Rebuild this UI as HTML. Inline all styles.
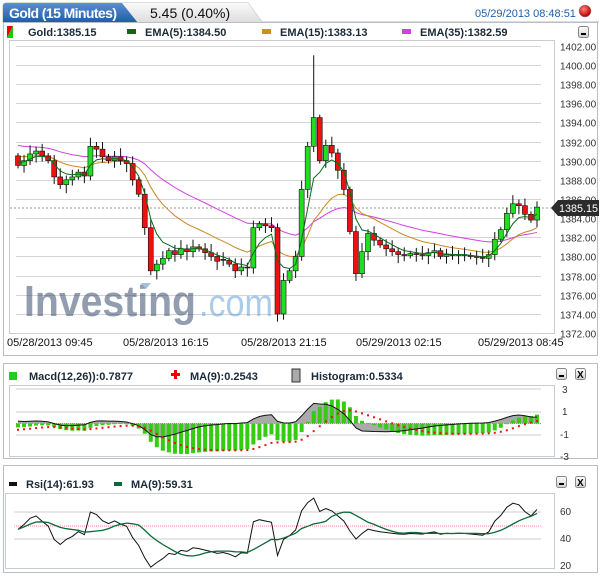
<!DOCTYPE html>
<html><head><meta charset="utf-8"><style>
body{margin:0;background:#fff;width:602px;height:575px;overflow:hidden;font-family:"Liberation Sans",Arial,sans-serif;}
svg text{font-family:"Liberation Sans",Arial,sans-serif;}
</style></head><body>
<svg id="s" width="602" height="575" xmlns="http://www.w3.org/2000/svg">
<defs>
<linearGradient id="tab" x1="0" y1="0" x2="0" y2="1"><stop offset="0" stop-color="#5b8fd0"/><stop offset="1" stop-color="#1d5ba8"/></linearGradient>
<linearGradient id="tab2" x1="0" y1="0" x2="0" y2="1"><stop offset="0" stop-color="#fafafa"/><stop offset="1" stop-color="#dcdcdc"/></linearGradient>
<radialGradient id="rb" cx="0.4" cy="0.35" r="0.6"><stop offset="0" stop-color="#ff8080"/><stop offset="1" stop-color="#c00000"/></radialGradient>
<linearGradient id="btn" x1="0" y1="0" x2="0" y2="1"><stop offset="0" stop-color="#fff"/><stop offset="1" stop-color="#d0d0d0"/></linearGradient>
</defs>
<path d="M3,23 L3,6 Q3,3 6,3 L248,3 L262,22 L599,22" fill="none" stroke="#b8bec4"/>
<path d="M3,23 L3,6 Q3,3 6,3 L248,3 L262,22 Z" fill="url(#tab2)"/>
<path d="M3,23 L3,6 Q3,3 6,3 L122,3 L138,23 Z" fill="url(#tab)"/>
<text x="9" y="18" font-size="14" font-weight="bold" fill="#fff" textLength="108">Gold (15 Minutes)</text>
<text x="150" y="18" font-size="14" fill="#111">5.45 (0.40%)</text>
<text x="475" y="17" font-size="11" fill="#1f5fa8">05/29/2013 08:48:51</text>
<circle cx="585" cy="11" r="6" fill="url(#rb)" stroke="#888" stroke-width="0.5"/>
<rect x="3.5" y="22.5" width="594" height="333" fill="#fff" stroke="#b8bec4"/>
<path d="M7,26 L13,26 L7,38 Z" fill="#e00"/><path d="M13,26 L13,38 L7,38 Z" fill="#1c1"/>
<g font-size="11" font-weight="bold" fill="#1a2a3a">
<text x="28" y="36">Gold:1385.15</text>
<rect x="127" y="29" width="9" height="5" fill="#0a6a1a"/><text x="145" y="36">EMA(5):1384.50</text>
<rect x="262" y="29" width="9" height="5" fill="#d09018"/><text x="280" y="36">EMA(15):1383.13</text>
<rect x="402" y="29" width="9" height="5" fill="#d040e0"/><text x="420" y="36">EMA(35):1382.59</text>
</g>
<rect x="578.5" y="26.5" width="10" height="11" rx="2" fill="url(#btn)" stroke="#888"/><rect x="581" y="33" width="5" height="2" fill="#000"/>
<rect x="9.5" y="40.5" width="545" height="293" fill="#fff" stroke="#c8ccd0"/>
<g id="grid" stroke="#d4d4d4" stroke-width="1"></g>
<g id="ylab" font-size="10" fill="#333"></g>
<g font-size="11" fill="#111">
<text x="7" y="346">05/28/2013 09:45</text><text x="123" y="346">05/28/2013 16:15</text>
<text x="241" y="346">05/28/2013 21:15</text><text x="356" y="346">05/29/2013 02:15</text>
<text x="478" y="346">05/29/2013 08:45</text>
</g>
<g opacity="0.55"><text x="24" y="316" font-size="44" font-weight="bold" fill="#3a4f6e" textLength="172" lengthAdjust="spacingAndGlyphs">Investing</text>
<text x="199" y="316" font-size="38" fill="#6aa0d8" textLength="74" lengthAdjust="spacingAndGlyphs">.com</text>
<path d="M141,283 L151,283 L146,289 Z" fill="#5a8ac0"/></g>
<line x1="10" y1="208" x2="553" y2="208" stroke="#999" stroke-dasharray="2,2"/>
<g id="main"></g>
<path d="M551,208 L558,200 L599,200 L599,216 L558,216 Z" fill="#2b2b2b"/>
<text x="559" y="212" font-size="11" fill="#fff" textLength="39" lengthAdjust="spacingAndGlyphs">1385.15</text>
<rect x="3.5" y="363.5" width="594" height="95" fill="#fff" stroke="#b8bec4"/>
<rect x="9" y="372" width="8" height="8" fill="#2c2"/>
<path d="M171,373 h3 v-3 h3 v3 h3 v3 h-3 v3 h-3 v-3 h-3 Z" fill="#e00"/>
<rect x="292" y="369" width="8" height="13" fill="#aaa" stroke="#333"/>
<g font-size="11" font-weight="bold" fill="#1a2a3a">
<text x="29" y="380">Macd(12,26)):0.7877</text><text x="190" y="380">MA(9):0.2543</text><text x="311" y="380">Histogram:0.5334</text></g>
<rect x="556.5" y="368.5" width="10" height="11" rx="2" fill="url(#btn)" stroke="#888"/><rect x="559" y="375" width="5" height="2" fill="#000"/>
<rect x="575.5" y="368.5" width="10" height="11" rx="2" fill="url(#btn)" stroke="#888"/><text x="577" y="378" font-size="10" font-weight="bold">X</text>
<rect x="9.5" y="385.5" width="545" height="71" fill="#fff" stroke="#c8ccd0"/>
<g stroke="#ccc"><line x1="16" y1="389" x2="541" y2="389"/><line x1="16" y1="412" x2="541" y2="412"/><line x1="16" y1="435" x2="541" y2="435"/></g>
<line x1="16" y1="423.5" x2="541" y2="423.5" stroke="#f55" stroke-dasharray="1,1"/>
<g font-size="10" fill="#333"><text x="562" y="393">3</text><text x="562" y="415">1</text><text x="560" y="438">-1</text><text x="560" y="460">-3</text></g>
<g id="macd"></g>
<rect x="3.5" y="465.5" width="594" height="107" fill="#fff" stroke="#b8bec4"/>
<rect x="9" y="482" width="8" height="4" fill="#111"/><rect x="114" y="482" width="8" height="4" fill="#0a6a3a"/>
<g font-size="11" font-weight="bold" fill="#1a2a3a"><text x="26" y="488">Rsi(14):61.93</text><text x="131" y="488">MA(9):59.31</text></g>
<rect x="556.5" y="476.5" width="10" height="11" rx="2" fill="url(#btn)" stroke="#888"/><rect x="559" y="483" width="5" height="2" fill="#000"/>
<rect x="575.5" y="476.5" width="10" height="11" rx="2" fill="url(#btn)" stroke="#888"/><text x="577" y="486" font-size="10" font-weight="bold">X</text>
<rect x="5.5" y="493.5" width="549" height="75" fill="#fff" stroke="#c8ccd0"/>
<g stroke="#ccc"><line x1="14" y1="512" x2="541" y2="512"/><line x1="14" y1="539" x2="541" y2="539"/></g>
<line x1="14" y1="526" x2="541" y2="526" stroke="#f88" stroke-dasharray="1,1"/>
<g font-size="10" fill="#333"><text x="560" y="515">60</text><text x="560" y="542">40</text><text x="560" y="569">20</text></g>
<g id="rsi"></g>
</svg>
<script>
var NS="http://www.w3.org/2000/svg";
function el(p,t,a){var e=document.createElementNS(NS,t);for(var k in a)e.setAttribute(k,a[k]);document.getElementById(p).appendChild(e);return e;}
function Y(p){return 45.7+(1402-p)*9.58;}
for(var i=0;i<16;i++){var p=1402-2*i;var y=Math.round(Y(p))+0.5;el("grid","line",{x1:16,y1:y,x2:541,y2:y});var t=el("ylab","text",{x:560,y:y+4});t.textContent=p.toFixed(2);}
var C=[1389.5,1390,1390.7,1391,1390.5,1390,1388.3,1387.5,1388,1388.3,1388.8,1388.4,1391.5,1391.2,1390.4,1390,1390.4,1390,1389.7,1388,1386.5,1383,1378.5,1379.2,1379.8,1380.6,1380.2,1380.8,1380.5,1381,1380.8,1380.4,1380,1379.5,1379.6,1379.2,1378.5,1378.9,1378.8,1383,1383.4,1383.2,1383,1374,1377.5,1378.5,1380,1387,1391.5,1394.5,1390,1391.6,1390.8,1389,1387,1382.6,1378.2,1380.5,1382.4,1381.7,1381.2,1380.8,1380.5,1380.2,1380.1,1380.3,1380.2,1380.1,1380.4,1380.6,1380,1380.2,1380.1,1380.2,1380.1,1380,1379.9,1379.8,1380.2,1381.8,1382.8,1384.5,1385.5,1385.3,1384.4,1383.8,1385.15];
var n=C.length,x0=18,dx=(537-18)/(n-1);
function X(i){return x0+i*dx;}
function ema(a,k,s){var r=[],v=s;for(var i=0;i<a.length;i++){v=v+(a[i]-v)*2/(k+1);r.push(v);}return r;}
function pl(g,pts,col,w){el(g,"polyline",{points:pts.join(" "),fill:"none",stroke:col,"stroke-width":w||1});}
var e5=ema(C,5,1390),e15=ema(C,15,1390.6),e35=ema(C,35,1391.7);
function line(arr){return arr.map(function(v,i){return X(i).toFixed(1)+","+Y(v).toFixed(1);});}
pl("main",line(e35),"#d040e0");pl("main",line(e15),"#c88a20");
for(var i=0;i<n;i++){var o=i?C[i-1]:1390.5,c=C[i];if(Math.abs(c-o)<0.1)o=c+0.1;
var hi=Math.max(o,c)+0.3+((i*7)%5)*0.15,lo=Math.min(o,c)-0.3-((i*3)%5)*0.15;if(i==49)hi=1401;if(i==43)lo=1373.2;
var x=X(i);el("main","line",{x1:x,y1:Y(hi),x2:x,y2:Y(lo),stroke:"#111"});
var t=Y(Math.max(o,c)),b=Y(Math.min(o,c));el("main","rect",{x:x-2.5,y:t,width:5,height:Math.max(1,b-t),fill:c>o?"#22dd22":"#ee1111",stroke:"#111","stroke-width":0.6});}
pl("main",line(e5),"#0a6a1a");
var e12=ema(C,12,1390.3),e26=ema(C,26,1390.6),m=[],sg,h=[];for(i=0;i<n;i++)m.push(e12[i]-e26[i]);sg=ema(m,9,-0.6);
function MY(v){return 423.5-v*11.4;}
var ap=["18,423.5"];for(i=0;i<n;i++){h.push(m[i]-sg[i]);ap.push(X(i).toFixed(1)+","+MY(h[i]).toFixed(1));}
ap.push(X(n-1)+",423.5");el("macd","polygon",{points:ap.join(" "),fill:"#aaa"});
for(i=0;i<n;i++){var y1=MY(m[i]);el("macd","rect",{x:X(i)-2,y:Math.min(y1,423.5),width:4,height:Math.abs(y1-423.5),fill:"#33cc11"});}
pl("macd",ap.slice(1,-1),"#111");
for(i=0;i<n;i++)el("macd","rect",{x:X(i)-1,y:MY(sg[i])-1,width:2,height:2,fill:"#e11"});
var ag=0,al=0,R=[];for(i=0;i<n;i++){var d=i?C[i]-C[i-1]:0;var g=d>0?d:0,l=d<0?-d:0;ag=(ag*13+g)/14+(i==0?0.25:0);al=(al*13+l)/14+(i==0?0.28:0);R.push(100-100/(1+ag/(al||1e-6)));}
var RM=[];for(i=0;i<n;i++){var s=0,k=0;for(var j=Math.max(0,i-8);j<=i;j++){s+=R[j];k++;}RM.push(s/k);}
function RY(v){return 539-(v-40)*1.35;}
pl("rsi",R.map(function(v,i){return X(i).toFixed(1)+","+RY(v).toFixed(1);}),"#111");
pl("rsi",RM.map(function(v,i){return X(i).toFixed(1)+","+RY(v).toFixed(1);}),"#0a6a3a",1.3);
</script>
</body></html>
